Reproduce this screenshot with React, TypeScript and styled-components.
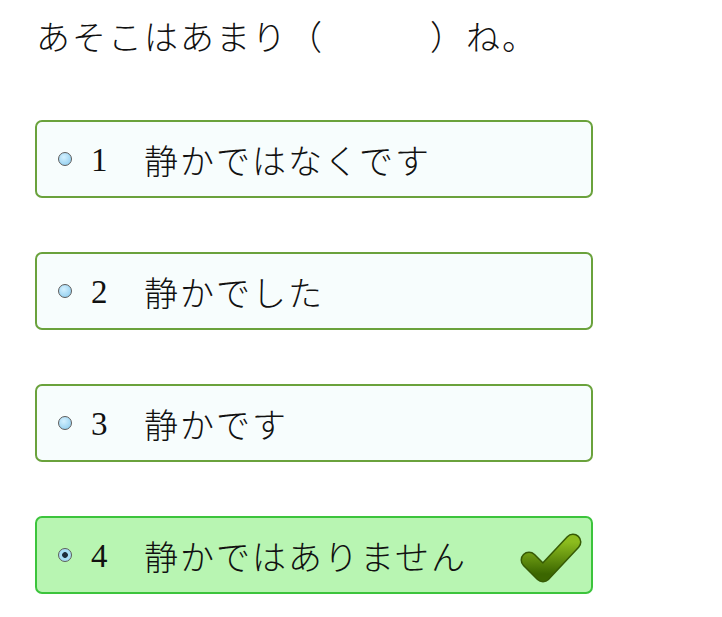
import React from 'react';
import styled, {createGlobalStyle} from 'styled-components';

const GlobalStyle = createGlobalStyle`
  html, body {
    margin: 0;
    padding: 0;
    background: #ffffff;
  }
  body {
    font-family: "Liberation Serif", "Noto Sans CJK JP", serif;
    color: #222;
  }
`;

interface IChoice {
  num: number;
  text: string;
  correct?: boolean;
}

const choices: IChoice[] = [
  {num: 1, text: '静かではなくです'},
  {num: 2, text: '静かでした'},
  {num: 3, text: '静かです'},
  {num: 4, text: '静かではありません', correct: true},
];

const CheckMark: React.FC = () => (
  <svg width="64" height="56" viewBox="0 0 64 56">
    <defs>
      <linearGradient id="chk" x1="0" y1="0" x2="0" y2="1">
        <stop offset="0" stopColor="#8cbc1e" />
        <stop offset="1" stopColor="#3b6600" />
      </linearGradient>
    </defs>
    <path
      d="M10 31 L24 45 L54 13"
      fill="none"
      stroke="#365a04"
      strokeWidth="17"
      strokeLinejoin="round"
      strokeLinecap="round"
    />
    <path
      d="M10 31 L24 45 L54 13"
      fill="none"
      stroke="url(#chk)"
      strokeWidth="14"
      strokeLinejoin="round"
      strokeLinecap="round"
    />
  </svg>
);

const App: React.FC = () => {
  return (
    <StyledPage>
      <GlobalStyle />
      <StyledQuestion>
        あそこはあまり（<StyledBlank />）ね。
      </StyledQuestion>
      <StyledList>
        {choices.map((choice) => (
          <StyledChoice key={choice.num} $correct={!!choice.correct}>
            <StyledRadio $checked={!!choice.correct} />
            <StyledNum>{choice.num}</StyledNum>
            <StyledText>{choice.text}</StyledText>
            {choice.correct && (
              <StyledCheckWrap>
                <CheckMark />
              </StyledCheckWrap>
            )}
          </StyledChoice>
        ))}
      </StyledList>
    </StyledPage>
  );
};

const StyledPage = styled.div`
  padding: 18px 0 0 35px;
  width: 558px;
`;
const StyledQuestion = styled.div`
  font-size: 34px;
  line-height: 42px;
  letter-spacing: 2px;
  padding-left: 1px;
  font-weight: 300;
  color: #111;
`;
const StyledBlank = styled.span`
  display: inline-block;
  width: 106px;
`;
const StyledList = styled.div`
  margin-top: 60px;
  display: flex;
  flex-direction: column;
  gap: 54px;
`;
const StyledChoice = styled.div<{$correct: boolean}>`
  box-sizing: border-box;
  height: 78px;
  display: flex;
  align-items: center;
  padding: 0 8px 0 21px;
  border-radius: 7px;
  border: 2px solid ${(p) => (p.$correct ? '#3cc43c' : '#6aa23c')};
  background: ${(p) => (p.$correct ? '#b8f5b2' : '#f7fdfd')};
`;
const StyledRadio = styled.span<{$checked: boolean}>`
  box-sizing: border-box;
  width: 14px;
  height: 14px;
  border-radius: 50%;
  border: 1px solid #5c5c5c;
  flex-shrink: 0;
  background: ${(p) => (p.$checked ?
    'radial-gradient(circle, #1c2c3c 0 2.5px, #a6dcf5 3.2px)' :
    'radial-gradient(circle at 40% 35%, #d4f1ff, #86c8ec)')};
`;
const StyledNum = styled.span`
  font-family: "Liberation Serif", serif;
  font-size: 33px;
  margin-left: 19px;
  width: 53px;
  margin-top: 2px;
  color: #111;
`;
const StyledText = styled.span`
  font-size: 34px;
  letter-spacing: 2px;
  font-weight: 300;
  color: #111;
  flex: 1;
  white-space: nowrap;
`;
const StyledCheckWrap = styled.span`
  display: flex;
  align-items: center;
  margin-top: 4px;
`;

export default App;
